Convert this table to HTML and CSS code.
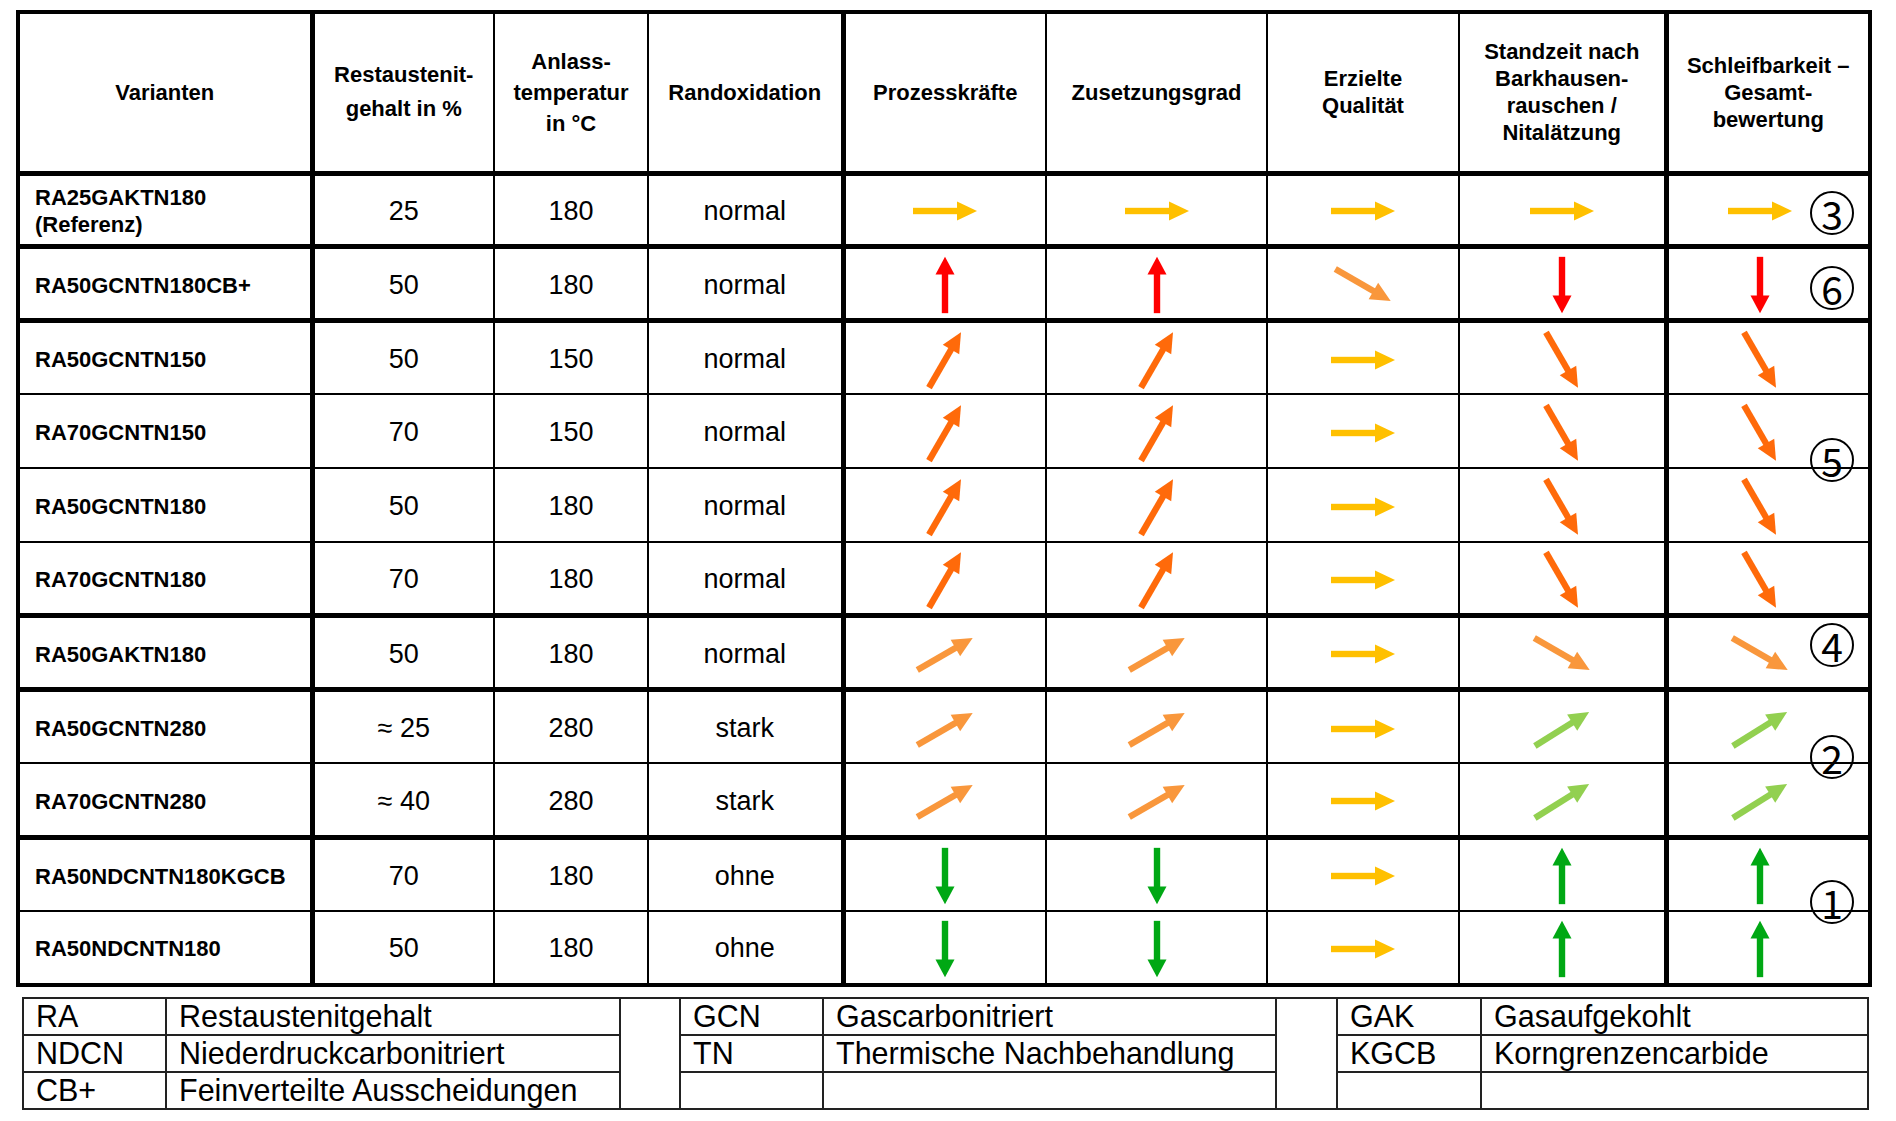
FILE: index.html
```html
<!DOCTYPE html>
<html lang="de">
<head>
<meta charset="utf-8">
<title>Schleifbarkeit – Gesamtbewertung</title>
<link rel="stylesheet" href="styles.css">
</head>
<body>
<svg class="defs" aria-hidden="true">
  <defs>
    <g id="ar">
      <rect x="-32" y="-3.2" width="45" height="6.4"/>
      <polygon points="12,-9.5 32,0 12,9.5"/>
    </g>
  </defs>
</svg>

<div class="page">
  <div class="tablewrap">
    <table class="main">
      <colgroup>
        <col class="c-var"><col class="c-ra"><col class="c-an"><col class="c-rand">
        <col class="c-pk"><col class="c-zg"><col class="c-eq"><col class="c-sz"><col class="c-sb">
      </colgroup>
      <thead>
        <tr class="head">
          <th class="tk">Varianten</th>
          <th class="lh34">Restaustenit-<br>gehalt in %</th>
          <th class="lh31">Anlass-<br>temperatur<br>in °C</th>
          <th class="tk">Randoxidation</th>
          <th>Prozesskräfte</th>
          <th>Zusetzungsgrad</th>
          <th>Erzielte<br>Qualität</th>
          <th class="tk">Standzeit nach<br>Barkhausen-<br>rauschen /<br>Nitalätzung</th>
          <th>Schleifbarkeit –<br>Gesamt-<br>bewertung</th>
        </tr>
      </thead>
      <tbody>
        <tr class="thick">
          <td class="var tk">RA25GAKTN180<br>(Referenz)</td><td>25</td><td>180</td><td class="tk">normal</td>
          <td><svg class="arw y" viewBox="-36 -32 72 64"><use href="#ar"/></svg></td>
          <td><svg class="arw y" viewBox="-36 -32 72 64"><use href="#ar"/></svg></td>
          <td><svg class="arw y" viewBox="-36 -32 72 64"><use href="#ar"/></svg></td>
          <td class="tk"><svg class="arw y" viewBox="-36 -32 72 64"><use href="#ar"/></svg></td>
          <td class="lastc"><svg class="arw y" viewBox="-36 -32 72 64"><use href="#ar"/></svg></td>
        </tr>
        <tr class="thick">
          <td class="var tk">RA50GCNTN180CB+</td><td>50</td><td>180</td><td class="tk">normal</td>
          <td><svg class="arw r" viewBox="-36 -32 72 64"><use href="#ar" transform="rotate(-90) scale(0.88,1)"/></svg></td>
          <td><svg class="arw r" viewBox="-36 -32 72 64"><use href="#ar" transform="rotate(-90) scale(0.88,1)"/></svg></td>
          <td><svg class="arw lo" viewBox="-36 -32 72 64"><use href="#ar" transform="rotate(30)"/></svg></td>
          <td class="tk"><svg class="arw r" viewBox="-36 -32 72 64"><use href="#ar" transform="rotate(90) scale(0.88,1)"/></svg></td>
          <td class="lastc"><svg class="arw r" viewBox="-36 -32 72 64"><use href="#ar" transform="rotate(90) scale(0.88,1)"/></svg></td>
        </tr>
        <tr>
          <td class="var tk">RA50GCNTN150</td><td>50</td><td>150</td><td class="tk">normal</td>
          <td><svg class="arw o" viewBox="-36 -32 72 64"><use href="#ar" transform="rotate(-60)"/></svg></td>
          <td><svg class="arw o" viewBox="-36 -32 72 64"><use href="#ar" transform="rotate(-60)"/></svg></td>
          <td><svg class="arw y" viewBox="-36 -32 72 64"><use href="#ar"/></svg></td>
          <td class="tk"><svg class="arw o" viewBox="-36 -32 72 64"><use href="#ar" transform="rotate(60)"/></svg></td>
          <td class="lastc"><svg class="arw o" viewBox="-36 -32 72 64"><use href="#ar" transform="rotate(60)"/></svg></td>
        </tr>
        <tr>
          <td class="var tk">RA70GCNTN150</td><td>70</td><td>150</td><td class="tk">normal</td>
          <td><svg class="arw o" viewBox="-36 -32 72 64"><use href="#ar" transform="rotate(-60)"/></svg></td>
          <td><svg class="arw o" viewBox="-36 -32 72 64"><use href="#ar" transform="rotate(-60)"/></svg></td>
          <td><svg class="arw y" viewBox="-36 -32 72 64"><use href="#ar"/></svg></td>
          <td class="tk"><svg class="arw o" viewBox="-36 -32 72 64"><use href="#ar" transform="rotate(60)"/></svg></td>
          <td class="lastc"><svg class="arw o" viewBox="-36 -32 72 64"><use href="#ar" transform="rotate(60)"/></svg></td>
        </tr>
        <tr>
          <td class="var tk">RA50GCNTN180</td><td>50</td><td>180</td><td class="tk">normal</td>
          <td><svg class="arw o" viewBox="-36 -32 72 64"><use href="#ar" transform="rotate(-60)"/></svg></td>
          <td><svg class="arw o" viewBox="-36 -32 72 64"><use href="#ar" transform="rotate(-60)"/></svg></td>
          <td><svg class="arw y" viewBox="-36 -32 72 64"><use href="#ar"/></svg></td>
          <td class="tk"><svg class="arw o" viewBox="-36 -32 72 64"><use href="#ar" transform="rotate(60)"/></svg></td>
          <td class="lastc"><svg class="arw o" viewBox="-36 -32 72 64"><use href="#ar" transform="rotate(60)"/></svg></td>
        </tr>
        <tr class="thick">
          <td class="var tk">RA70GCNTN180</td><td>70</td><td>180</td><td class="tk">normal</td>
          <td><svg class="arw o" viewBox="-36 -32 72 64"><use href="#ar" transform="rotate(-60)"/></svg></td>
          <td><svg class="arw o" viewBox="-36 -32 72 64"><use href="#ar" transform="rotate(-60)"/></svg></td>
          <td><svg class="arw y" viewBox="-36 -32 72 64"><use href="#ar"/></svg></td>
          <td class="tk"><svg class="arw o" viewBox="-36 -32 72 64"><use href="#ar" transform="rotate(60)"/></svg></td>
          <td class="lastc"><svg class="arw o" viewBox="-36 -32 72 64"><use href="#ar" transform="rotate(60)"/></svg></td>
        </tr>
        <tr class="thick">
          <td class="var tk">RA50GAKTN180</td><td>50</td><td>180</td><td class="tk">normal</td>
          <td><svg class="arw lo" viewBox="-36 -32 72 64"><use href="#ar" transform="rotate(-30)"/></svg></td>
          <td><svg class="arw lo" viewBox="-36 -32 72 64"><use href="#ar" transform="rotate(-30)"/></svg></td>
          <td><svg class="arw y" viewBox="-36 -32 72 64"><use href="#ar"/></svg></td>
          <td class="tk"><svg class="arw lo" viewBox="-36 -32 72 64"><use href="#ar" transform="rotate(30)"/></svg></td>
          <td class="lastc"><svg class="arw lo" viewBox="-36 -32 72 64"><use href="#ar" transform="rotate(30)"/></svg></td>
        </tr>
        <tr>
          <td class="var tk">RA50GCNTN280</td><td>≈ 25</td><td>280</td><td class="tk">stark</td>
          <td><svg class="arw lo" viewBox="-36 -32 72 64"><use href="#ar" transform="rotate(-30)"/></svg></td>
          <td><svg class="arw lo" viewBox="-36 -32 72 64"><use href="#ar" transform="rotate(-30)"/></svg></td>
          <td><svg class="arw y" viewBox="-36 -32 72 64"><use href="#ar"/></svg></td>
          <td class="tk"><svg class="arw lg" viewBox="-36 -32 72 64"><use href="#ar" transform="rotate(-32)"/></svg></td>
          <td class="lastc"><svg class="arw lg" viewBox="-36 -32 72 64"><use href="#ar" transform="rotate(-32)"/></svg></td>
        </tr>
        <tr class="thick">
          <td class="var tk">RA70GCNTN280</td><td>≈ 40</td><td>280</td><td class="tk">stark</td>
          <td><svg class="arw lo" viewBox="-36 -32 72 64"><use href="#ar" transform="rotate(-30)"/></svg></td>
          <td><svg class="arw lo" viewBox="-36 -32 72 64"><use href="#ar" transform="rotate(-30)"/></svg></td>
          <td><svg class="arw y" viewBox="-36 -32 72 64"><use href="#ar"/></svg></td>
          <td class="tk"><svg class="arw lg" viewBox="-36 -32 72 64"><use href="#ar" transform="rotate(-32)"/></svg></td>
          <td class="lastc"><svg class="arw lg" viewBox="-36 -32 72 64"><use href="#ar" transform="rotate(-32)"/></svg></td>
        </tr>
        <tr>
          <td class="var tk">RA50NDCNTN180KGCB</td><td>70</td><td>180</td><td class="tk">ohne</td>
          <td><svg class="arw g" viewBox="-36 -32 72 64"><use href="#ar" transform="rotate(90) scale(0.88,1)"/></svg></td>
          <td><svg class="arw g" viewBox="-36 -32 72 64"><use href="#ar" transform="rotate(90) scale(0.88,1)"/></svg></td>
          <td><svg class="arw y" viewBox="-36 -32 72 64"><use href="#ar"/></svg></td>
          <td class="tk"><svg class="arw g" viewBox="-36 -32 72 64"><use href="#ar" transform="rotate(-90) scale(0.88,1)"/></svg></td>
          <td class="lastc"><svg class="arw g" viewBox="-36 -32 72 64"><use href="#ar" transform="rotate(-90) scale(0.88,1)"/></svg></td>
        </tr>
        <tr>
          <td class="var tk">RA50NDCNTN180</td><td>50</td><td>180</td><td class="tk">ohne</td>
          <td><svg class="arw g" viewBox="-36 -32 72 64"><use href="#ar" transform="rotate(90) scale(0.88,1)"/></svg></td>
          <td><svg class="arw g" viewBox="-36 -32 72 64"><use href="#ar" transform="rotate(90) scale(0.88,1)"/></svg></td>
          <td><svg class="arw y" viewBox="-36 -32 72 64"><use href="#ar"/></svg></td>
          <td class="tk"><svg class="arw g" viewBox="-36 -32 72 64"><use href="#ar" transform="rotate(-90) scale(0.88,1)"/></svg></td>
          <td class="lastc"><svg class="arw g" viewBox="-36 -32 72 64"><use href="#ar" transform="rotate(-90) scale(0.88,1)"/></svg></td>
        </tr>
      </tbody>
    </table>
    <span class="circ n3">3</span>
    <span class="circ n6">6</span>
    <span class="circ n5">5</span>
    <span class="circ n4">4</span>
    <span class="circ n2">2</span>
    <span class="circ n1">1</span>
  </div>

  <table class="legend">
    <colgroup>
      <col class="l-ab"><col class="l-de"><col class="l-sp">
      <col class="l-ab2"><col class="l-de2"><col class="l-sp2">
      <col class="l-ab3"><col class="l-de3">
    </colgroup>
    <tr>
      <td>RA</td><td>Restaustenitgehalt</td><td class="sp" rowspan="3"></td>
      <td>GCN</td><td>Gascarbonitriert</td><td class="sp" rowspan="3"></td>
      <td>GAK</td><td>Gasaufgekohlt</td>
    </tr>
    <tr>
      <td>NDCN</td><td>Niederdruckcarbonitriert</td>
      <td>TN</td><td>Thermische Nachbehandlung</td>
      <td>KGCB</td><td>Korngrenzencarbide</td>
    </tr>
    <tr>
      <td>CB+</td><td>Feinverteilte Ausscheidungen</td>
      <td></td><td></td>
      <td></td><td></td>
    </tr>
  </table>
</div>
</body>
</html>
```

FILE: styles.css
```css
html, body {
  margin: 0;
  padding: 0;
  background: #fff;
}
body {
  font-family: "Liberation Sans", Arial, sans-serif;
  color: #000;
}
.defs {
  display: none;
}
.page {
  padding: 10px 0 0 16px;
}
.tablewrap {
  position: relative;
  width: 1856px;
}
.main {
  border-collapse: collapse;
  table-layout: fixed;
  width: 1856px;
  border: 4px solid #000;
}
.c-var { width: 294px; }
.c-ra { width: 182px; }
.c-an { width: 154px; }
.c-rand { width: 195px; }
.c-pk { width: 203px; }
.c-zg { width: 221px; }
.c-eq { width: 192px; }
.c-sz { width: 207px; }
.c-sb { width: 204px; }

.main th,
.main td {
  border: 2px solid #000;
  padding: 0;
  text-align: center;
  vertical-align: middle;
}
.main th {
  font-size: 22px;
  font-weight: bold;
  line-height: 27px;
}
.main th.lh34 { line-height: 34px; }
.main th.lh31 { line-height: 31px; }
.main thead tr {
  height: 161px;
}
.main thead th {
  border-bottom: 5px solid #000;
}
.main tbody tr {
  height: 73.8px;
}
.main tr.thick td {
  border-bottom: 5px solid #000;
}
.main .tk {
  border-right: 5px solid #000;
}
.main td {
  font-size: 27px;
  padding-top: 3px;
}
.main td.var {
  text-align: left;
  padding: 3px 0 0 15px;
  font-size: 22px;
  font-weight: bold;
  line-height: 27px;
}
.main td.lastc {
  padding-right: 16px;
}
.arw {
  display: block;
  width: 72px;
  height: 64px;
  margin: 0 auto;
}
.y { fill: #FFC000; }
.r { fill: #FF0000; }
.o { fill: #FF6A0A; }
.lo { fill: #F9973C; }
.lg { fill: #92D050; }
.g { fill: #00A814; }

.circ {
  position: absolute;
  left: 1794px;
  width: 44px;
  height: 44px;
  box-sizing: border-box;
  border: 2.5px solid #000;
  border-radius: 50%;
  display: flex;
  align-items: center;
  justify-content: center;
  font-family: "Noto Sans CJK JP", "Liberation Sans", sans-serif;
  font-size: 39px;
  line-height: 1;
}
.n3 { top: 181px; }
.n6 { top: 256px; }
.n5 { top: 428px; }
.n4 { top: 613px; }
.n2 { top: 725px; }
.n1 { top: 870px; }

.legend {
  border-collapse: collapse;
  table-layout: fixed;
  width: 1847px;
  margin: 10px 0 0 6px;
  border: 2px solid #222;
}
.l-ab { width: 143px; }
.l-de { width: 454px; }
.l-sp { width: 60px; }
.l-ab2 { width: 143px; }
.l-de2 { width: 453px; }
.l-sp2 { width: 61px; }
.l-ab3 { width: 144px; }
.l-de3 { width: 387px; }
.legend td {
  border: 2px solid #222;
  height: 35px;
  padding: 0 0 0 12px;
  font-size: 30.5px;
  line-height: 33px;
  white-space: nowrap;
  overflow: hidden;
}
.legend td.sp {
  padding: 0;
}
```
